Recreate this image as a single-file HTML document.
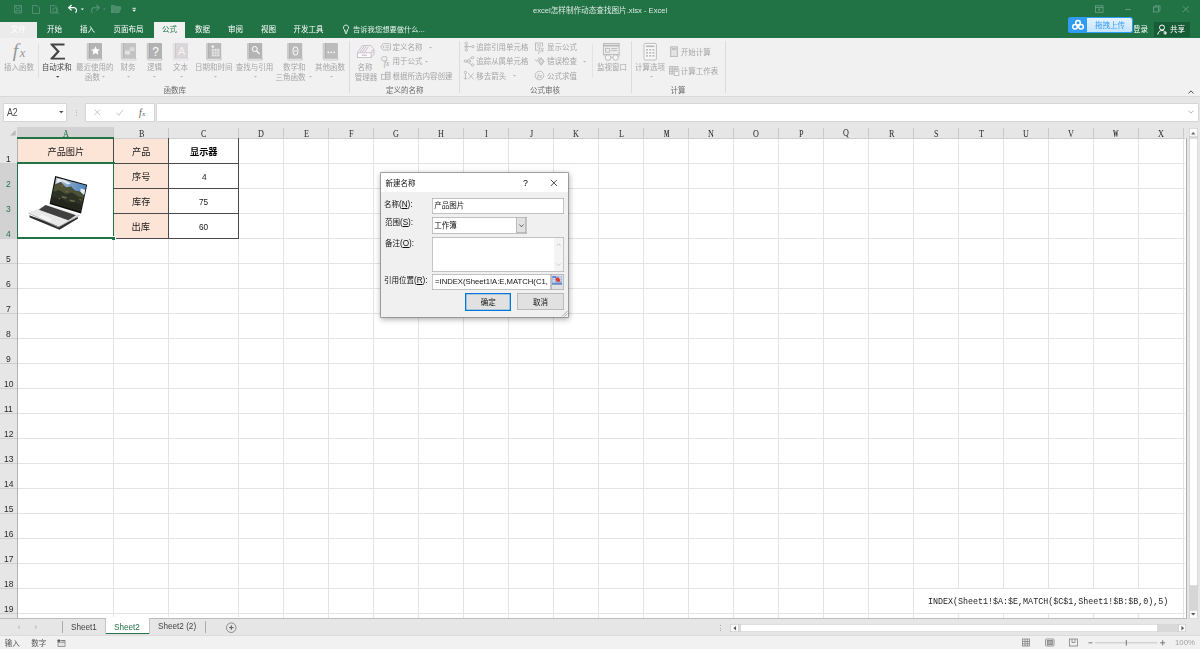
<!DOCTYPE html>
<html lang="zh-CN"><head><meta charset="utf-8"><title>excel怎样制作动态查找图片.xlsx - Excel</title>
<style>
html,body{margin:0;padding:0}
body{width:1200px;height:649px;overflow:hidden;position:relative;background:#fff;font-family:"Liberation Sans","Noto Sans CJK SC",sans-serif;}
.t{position:absolute;white-space:nowrap;line-height:1;opacity:.999}
.r{position:absolute}
.s{font-family:"Liberation Sans","Noto Sans CJK SC",sans-serif}
.m{font-family:"Liberation Mono","Noto Sans CJK SC",monospace}
.n{font-family:"Liberation Serif","Noto Serif CJK SC",serif}
svg{position:absolute;overflow:visible}
</style></head><body>

<div class="r" style="left:0px;top:0px;width:1200px;height:38px;background:#217346;"></div>
<div class="t" style="left:533px;top:5px;color:#dfeae3;font-size:7.6px;line-height:12px;">excel怎样制作动态查找图片.xlsx - Excel</div>
<div class="r" style="left:0px;top:22px;width:36.8px;height:16px;background:#ebebeb;"></div>
<div class="t" style="left:11px;top:24px;color:#ffffff;font-size:7.5px;line-height:12px;">文件</div>
<div class="r" style="left:154px;top:22px;width:31px;height:16px;background:#f1f1f1;"></div>
<div class="t" style="left:47px;top:24px;color:#fff;font-size:7.5px;line-height:12px;">开始</div>
<div class="t" style="left:80px;top:24px;color:#fff;font-size:7.5px;line-height:12px;">插入</div>
<div class="t" style="left:113.5px;top:24px;color:#fff;font-size:7.5px;line-height:12px;">页面布局</div>
<div class="t" style="left:162px;top:24px;color:#217346;font-size:7.5px;line-height:12px;">公式</div>
<div class="t" style="left:195px;top:24px;color:#fff;font-size:7.5px;line-height:12px;">数据</div>
<div class="t" style="left:228px;top:24px;color:#fff;font-size:7.5px;line-height:12px;">审阅</div>
<div class="t" style="left:261px;top:24px;color:#fff;font-size:7.5px;line-height:12px;">视图</div>
<div class="t" style="left:293.5px;top:24px;color:#fff;font-size:7.5px;line-height:12px;">开发工具</div>
<div class="t" style="left:353px;top:24px;color:#e8f1ec;font-size:7.3px;line-height:11px;">告诉我您想要做什么...</div>
<svg style="left:342px;top:24px" width="8" height="11" viewBox="0 0 8 11"><path d="M4 1a2.6 2.6 0 0 0-1.5 4.7v1.5h3V5.7A2.6 2.6 0 0 0 4 1z" fill="none" stroke="#fff" stroke-width=".8"/><path d="M2.8 8.4h2.4M3.1 9.5h1.8" stroke="#fff" stroke-width=".7"/></svg>
<svg style="left:0;top:0" width="150" height="20" viewBox="0 0 150 20">
<g fill="none" stroke="#56957a" stroke-width="0.85">
<path d="M14.5 5.5h7v7.5h-7z M16 5.5v2.8h4V5.5 M16 13v-2.6h4V13"/>
<path d="M32.5 5.5h4.5l2.5 2.5v5.5h-7z"/>
<path d="M50.5 5.5h4.5l2 2v5.5h-6.5z"/><circle cx="55" cy="10" r="2.2"/><path d="M56.7 11.7l2.3 2.3"/>
</g>
<path d="M75.5 12.8a2.9 2.9 0 0 0-2.4-5.1h-3.6" fill="none" stroke="#fff" stroke-width="1.25"/><path d="M71.6 5l-2.9 2.7 2.9 2.7" fill="none" stroke="#fff" stroke-width="1.25"/>
<path d="M80.8 8.5h3l-1.5 1.7z" fill="#fff"/>
<path d="M92.5 12.8a2.9 2.9 0 0 1 2.4-5.1h3.6" fill="none" stroke="#56957a" stroke-width="1.1"/><path d="M96.4 5l2.9 2.7-2.9 2.7" fill="none" stroke="#56957a" stroke-width="1.1"/>
<path d="M103 8.5h2.6l-1.3 1.5z" fill="#56957a"/>
<path d="M111.5 12.5v-7h3.5l1 1.2h4.5v1.3 M111.5 12.5l2-4.5h7.5l-2 4.5z" fill="#4a8a67" stroke="#56957a" stroke-width=".8"/>
<path d="M132.6 8.3h3.2" stroke="#fff" stroke-width=".9"/><path d="M132.4 9.8h3.6l-1.8 2z" fill="#fff"/>
</g></svg>
<svg style="left:1090px;top:0" width="110" height="20" viewBox="0 0 110 20"><g fill="none" stroke="#72a78c" stroke-width=".75">
<rect x="5.5" y="5.8" width="7.5" height="6.5"/><path d="M5.5 7.5h7.5M9.2 11.2V8.8M8 9.8l1.2-1.2 1.2 1.2"/>
<path d="M35 9.5h6"/>
<rect x="63.5" y="7" width="5" height="5"/><path d="M65 7V5.8h5v5h-1.5"/>
<path d="M92.8 6.2l6 6M98.8 6.2l-6 6"/></g></svg>
<div class="r" style="left:1068px;top:17px;width:65px;height:16px;border-radius:2.5px;background:#2f9bf3;overflow:hidden"><div class="r" style="left:19px;top:1px;width:45px;height:14px;border-radius:0 2px 2px 0;background:linear-gradient(#e3f3ff,#c4e4fd)"></div></div>
<svg style="left:1071px;top:19px" width="14" height="12" viewBox="0 0 14 12"><g fill="none" stroke="#fff" stroke-width="1.5"><circle cx="7" cy="3.8" r="2.3"/><circle cx="4" cy="7.8" r="2.3"/><circle cx="10" cy="7.8" r="2.3"/></g></svg>
<div class="t" style="left:1095px;top:20px;color:#3c9df5;font-size:7.5px;line-height:12px;">拖拽上传</div>
<div class="t" style="left:1133px;top:24px;color:#fff;font-size:7.5px;line-height:12px;clip-path:inset(0 0 0 1px)">登录</div>
<div class="r" style="left:1154px;top:22px;width:36px;height:15px;background:#185c37;"></div>
<svg style="left:1157px;top:24px" width="11" height="11" viewBox="0 0 11 11"><g fill="none" stroke="#fff" stroke-width="1"><circle cx="5" cy="3.5" r="2.5"/><path d="M.8 10.5c.3-2.6 2-4 4.2-4 1 0 1.8.3 2.5.8"/><path d="M8.2 7.2v3.6M6.4 9h3.6"/></g></svg>
<div class="t" style="left:1170px;top:24px;color:#fff;font-size:7.5px;line-height:12px;">共享</div>
<div class="r" style="left:0px;top:38px;width:1200px;height:58px;background:#f1f1f1;"></div>
<div class="r" style="left:0px;top:96px;width:1200px;height:1px;background:#dadada;"></div>
<div class="r" style="left:0px;top:97px;width:1200px;height:552px;background:#e6e6e6;"></div>
<div class="r" style="left:38px;top:44px;width:1px;height:34px;background:#e0e0e0;"></div>
<div class="r" style="left:349px;top:41px;width:1px;height:52px;background:#dcdcdc;"></div>
<div class="r" style="left:459px;top:41px;width:1px;height:52px;background:#dcdcdc;"></div>
<div class="r" style="left:592px;top:44px;width:1px;height:34px;background:#e3e3e3;"></div>
<div class="r" style="left:631px;top:41px;width:1px;height:52px;background:#dcdcdc;"></div>
<div class="r" style="left:725px;top:41px;width:1px;height:52px;background:#dcdcdc;"></div>
<div class="t" style="left:4px;top:62px;color:#a6a6a6;font-size:7.5px;line-height:12px;">插入函数</div>
<div class="t" style="left:41.8px;top:62px;color:#4a4a4a;font-size:7.5px;line-height:12px;">自动求和</div>
<div class="t" style="left:76px;top:62px;color:#a6a6a6;font-size:7.5px;line-height:12px;">最近使用的</div>
<div class="t" style="left:85px;top:72px;color:#a6a6a6;font-size:7.5px;line-height:12px;">函数</div>
<div class="t" style="left:120.5px;top:62px;color:#a6a6a6;font-size:7.5px;line-height:12px;">财务</div>
<div class="t" style="left:147px;top:62px;color:#a6a6a6;font-size:7.5px;line-height:12px;">逻辑</div>
<div class="t" style="left:173px;top:62px;color:#a6a6a6;font-size:7.5px;line-height:12px;">文本</div>
<div class="t" style="left:195px;top:62px;color:#a6a6a6;font-size:7.5px;line-height:12px;">日期和时间</div>
<div class="t" style="left:235.8px;top:62px;color:#a6a6a6;font-size:7.5px;line-height:12px;">查找与引用</div>
<div class="t" style="left:283px;top:62px;color:#a6a6a6;font-size:7.5px;line-height:12px;">数学和</div>
<div class="t" style="left:275.5px;top:72px;color:#a6a6a6;font-size:7.5px;line-height:12px;">三角函数</div>
<div class="t" style="left:315px;top:62px;color:#a6a6a6;font-size:7.5px;line-height:12px;">其他函数</div>
<div class="t" style="left:357.5px;top:62px;color:#a6a6a6;font-size:7.5px;line-height:12px;">名称</div>
<div class="t" style="left:354.7px;top:72px;color:#a6a6a6;font-size:7.5px;line-height:12px;">管理器</div>
<div class="t" style="left:163.5px;top:85px;color:#6a6a6a;font-size:7.5px;line-height:12px;">函数库</div>
<div class="t" style="left:386px;top:85px;color:#6a6a6a;font-size:7.5px;line-height:12px;">定义的名称</div>
<div class="t" style="left:530px;top:85px;color:#6a6a6a;font-size:7.5px;line-height:12px;">公式审核</div>
<div class="t" style="left:670.5px;top:85px;color:#6a6a6a;font-size:7.5px;line-height:12px;">计算</div>
<div class="t" style="left:392.5px;top:42px;color:#a6a6a6;font-size:7.5px;line-height:12px;">定义名称</div>
<div class="t" style="left:392.5px;top:56px;color:#a6a6a6;font-size:7.5px;line-height:12px;">用于公式</div>
<div class="t" style="left:392.5px;top:71px;color:#a6a6a6;font-size:7.5px;line-height:12px;">根据所选内容创建</div>
<div class="t" style="left:476.3px;top:42px;color:#a6a6a6;font-size:7.45px;line-height:12px;">追踪引用单元格</div>
<div class="t" style="left:476.3px;top:56px;color:#a6a6a6;font-size:7.45px;line-height:12px;">追踪从属单元格</div>
<div class="t" style="left:476.3px;top:71px;color:#a6a6a6;font-size:7.5px;line-height:12px;">移去箭头</div>
<div class="t" style="left:547px;top:42px;color:#a6a6a6;font-size:7.5px;line-height:12px;">显示公式</div>
<div class="t" style="left:547px;top:56px;color:#a6a6a6;font-size:7.5px;line-height:12px;">错误检查</div>
<div class="t" style="left:547px;top:71px;color:#a6a6a6;font-size:7.5px;line-height:12px;">公式求值</div>
<div class="t" style="left:597px;top:62px;color:#a6a6a6;font-size:7.5px;line-height:12px;">监视窗口</div>
<div class="t" style="left:635px;top:62px;color:#a6a6a6;font-size:7.5px;line-height:12px;">计算选项</div>
<div class="t" style="left:680.8px;top:47px;color:#a6a6a6;font-size:7.5px;line-height:12px;">开始计算</div>
<div class="t" style="left:680.8px;top:66px;color:#a6a6a6;font-size:7.5px;line-height:12px;">计算工作表</div>
<svg style="left:56.3px;top:75.65px" width="3.4" height="1.7" viewBox="0 0 4 2"><path d="M0 0h4L2 2z" fill="#444"/></svg>
<svg style="left:102px;top:75.75px" width="3" height="1.5" viewBox="0 0 4 2"><path d="M0 0h4L2 2z" fill="#b5b5b5"/></svg>
<svg style="left:127px;top:75.75px" width="3" height="1.5" viewBox="0 0 4 2"><path d="M0 0h4L2 2z" fill="#b5b5b5"/></svg>
<svg style="left:153px;top:75.75px" width="3" height="1.5" viewBox="0 0 4 2"><path d="M0 0h4L2 2z" fill="#b5b5b5"/></svg>
<svg style="left:179.5px;top:75.75px" width="3" height="1.5" viewBox="0 0 4 2"><path d="M0 0h4L2 2z" fill="#b5b5b5"/></svg>
<svg style="left:213.5px;top:75.75px" width="3" height="1.5" viewBox="0 0 4 2"><path d="M0 0h4L2 2z" fill="#b5b5b5"/></svg>
<svg style="left:254px;top:75.75px" width="3" height="1.5" viewBox="0 0 4 2"><path d="M0 0h4L2 2z" fill="#b5b5b5"/></svg>
<svg style="left:308.5px;top:75.75px" width="3" height="1.5" viewBox="0 0 4 2"><path d="M0 0h4L2 2z" fill="#b5b5b5"/></svg>
<svg style="left:329.5px;top:75.75px" width="3" height="1.5" viewBox="0 0 4 2"><path d="M0 0h4L2 2z" fill="#b5b5b5"/></svg>
<svg style="left:428.5px;top:46.75px" width="3" height="1.5" viewBox="0 0 4 2"><path d="M0 0h4L2 2z" fill="#b5b5b5"/></svg>
<svg style="left:425.2px;top:60.75px" width="3" height="1.5" viewBox="0 0 4 2"><path d="M0 0h4L2 2z" fill="#b5b5b5"/></svg>
<svg style="left:512.5px;top:75.05px" width="3" height="1.5" viewBox="0 0 4 2"><path d="M0 0h4L2 2z" fill="#b5b5b5"/></svg>
<svg style="left:583px;top:60.75px" width="3" height="1.5" viewBox="0 0 4 2"><path d="M0 0h4L2 2z" fill="#b5b5b5"/></svg>
<svg style="left:650px;top:75.95px" width="3" height="1.5" viewBox="0 0 4 2"><path d="M0 0h4L2 2z" fill="#b5b5b5"/></svg>
<svg style="left:0;top:38px" width="730" height="58" viewBox="0 38 730 58"><text x="12.8" y="57" font-family="Liberation Serif,serif" font-style="italic" font-size="19.5" fill="#969696">f</text><text x="19.8" y="57.3" font-family="Liberation Serif,serif" font-style="italic" font-size="12.5" fill="#969696">x</text><path d="M50.5 43.5h14v1.9h-10.3l5.6 6.1-5.6 6.2h10.8v1.8h-14.5v-1.3l6.3-6.7-6.3-6.7z" fill="#444"/><g><rect x="86.8" y="43" width="15.2" height="16" rx=".8" fill="#b4b4b4"/><rect x="86.8" y="43" width="2.3" height="16" fill="#fff" opacity=".28"/><rect x="89.1" y="43" width=".6" height="15.5" fill="#000" opacity=".12"/><path d="M88.39999999999999 58.4H102V60H88.39999999999999a.8 .8 0 0 1 0-1.6z" fill="#f7f7f7" stroke="#b4b4b4" stroke-width=".7"/><path d="M95.5 46.3l1.3 2.9 3.1.3-2.3 2.1.7 3.1-2.8-1.7-2.8 1.7.7-3.1-2.3-2.1 3.1-.3z" fill="#fff"/></g><g><rect x="120.8" y="43" width="15.2" height="16" rx=".8" fill="#c3c3c3"/><rect x="120.8" y="43" width="2.3" height="16" fill="#fff" opacity=".28"/><rect x="123.1" y="43" width=".6" height="15.5" fill="#000" opacity=".12"/><path d="M122.39999999999999 58.4H136V60H122.39999999999999a.8 .8 0 0 1 0-1.6z" fill="#f7f7f7" stroke="#c3c3c3" stroke-width=".7"/><rect x="129.8" y="47.2" width="4.8" height="3.8" rx=".8" fill="#dedede"/><rect x="125" y="50.6" width="5" height="3.8" rx=".8" fill="#e6e6e6"/><path d="M125 52h5M129.8 48.6h4.8" stroke="#cfcfcf" stroke-width=".5"/></g><g><rect x="146.8" y="43" width="15.2" height="16" rx=".8" fill="#b2b2b2"/><rect x="146.8" y="43" width="2.3" height="16" fill="#fff" opacity=".28"/><rect x="149.10000000000002" y="43" width=".6" height="15.5" fill="#000" opacity=".12"/><path d="M148.4 58.4H162V60H148.4a.8 .8 0 0 1 0-1.6z" fill="#f7f7f7" stroke="#b2b2b2" stroke-width=".7"/><text x="155.7" y="55.8" text-anchor="middle" font-family="Liberation Sans,sans-serif" font-size="12" fill="#fff">?</text></g><g><rect x="172.8" y="43" width="15.2" height="16" rx=".8" fill="#dad6da"/><rect x="172.8" y="43" width="2.3" height="16" fill="#fff" opacity=".28"/><rect x="175.10000000000002" y="43" width=".6" height="15.5" fill="#000" opacity=".12"/><path d="M174.4 58.4H188V60H174.4a.8 .8 0 0 1 0-1.6z" fill="#f7f7f7" stroke="#dad6da" stroke-width=".7"/><text x="181.7" y="55.3" text-anchor="middle" font-family="Liberation Sans,sans-serif" font-size="11" fill="#f6f4f6">A</text></g><g><rect x="206" y="43" width="15.2" height="16" rx=".8" fill="#b9b9b9"/><rect x="206" y="43" width="2.3" height="16" fill="#fff" opacity=".28"/><rect x="208.3" y="43" width=".6" height="15.5" fill="#000" opacity=".12"/><path d="M207.6 58.4H221.2V60H207.6a.8 .8 0 0 1 0-1.6z" fill="#f7f7f7" stroke="#b9b9b9" stroke-width=".7"/><rect x="211.8" y="48.8" width="7.6" height="7.6" fill="#e6e6e6"/><path d="M211.8 51.3h7.6M211.8 53.9h7.6M214.3 48.8v7.6M216.9 48.8v7.6" stroke="#b9b9b9" stroke-width=".6"/><circle cx="212.8" cy="46.6" r="1.8" fill="#eee" stroke="#a4a4a4" stroke-width=".5"/></g><g><rect x="247" y="43" width="15.2" height="16" rx=".8" fill="#b4b4b4"/><rect x="247" y="43" width="2.3" height="16" fill="#fff" opacity=".28"/><rect x="249.3" y="43" width=".6" height="15.5" fill="#000" opacity=".12"/><path d="M248.6 58.4H262.2V60H248.6a.8 .8 0 0 1 0-1.6z" fill="#f7f7f7" stroke="#b4b4b4" stroke-width=".7"/><circle cx="254.7" cy="49" r="2.5" fill="none" stroke="#fff" stroke-width="1"/><path d="M256.6 51l3 3.2" stroke="#fff" stroke-width="1.2"/></g><g><rect x="287" y="43" width="15.2" height="16" rx=".8" fill="#b9b9b9"/><rect x="287" y="43" width="2.3" height="16" fill="#fff" opacity=".28"/><rect x="289.3" y="43" width=".6" height="15.5" fill="#000" opacity=".12"/><path d="M288.6 58.4H302.2V60H288.6a.8 .8 0 0 1 0-1.6z" fill="#f7f7f7" stroke="#b9b9b9" stroke-width=".7"/><ellipse cx="295.5" cy="51" rx="2.4" ry="4" fill="none" stroke="#f4f4f4" stroke-width="1.1"/><path d="M293.5 51h4" stroke="#f4f4f4" stroke-width=".9"/></g><g><rect x="322.7" y="43" width="15.2" height="16" rx=".8" fill="#bcbcbc"/><rect x="322.7" y="43" width="2.3" height="16" fill="#fff" opacity=".28"/><rect x="325" y="43" width=".6" height="15.5" fill="#000" opacity=".12"/><path d="M324.3 58.4H337.9V60H324.3a.8 .8 0 0 1 0-1.6z" fill="#f7f7f7" stroke="#bcbcbc" stroke-width=".7"/><circle cx="328.3" cy="52.3" r=".85" fill="#fff"/><circle cx="331.2" cy="52.3" r=".85" fill="#fff"/><circle cx="334.1" cy="52.3" r=".85" fill="#fff"/></g><g fill="#f5f2f5" stroke="#c0b6c0" stroke-width=".8"><path d="M357.4 52.8l5-7.3h8.2l3.4 4v4.6l-3 3.4"/><path d="M364.3 46l-4.3 6.3M366.3 46.3l-4.2 6M368.3 46.8l-3.8 5.6M371.3 51.3l2.5-1.8M371.3 53l2.5-1.8"/><rect x="357.4" y="52.8" width="13.7" height="4.8" fill="#fcfcfc"/><path d="M361.5 55.2h5.5" stroke-width="1"/></g><g fill="none" stroke="#b2b2b2" stroke-width=".8"><path d="M383.3 43.6h6.2a1 1 0 0 1 1 1v4.4a1 1 0 0 1-1 1h-6.2l-2.6-3.2z"/><path d="M385.4 45.8h3.6M385.4 47.8h3.6"/><circle cx="383.5" cy="46.8" r=".5" fill="#b2b2b2"/></g><g fill="none" stroke="#b2b2b2" stroke-width=".8"><path d="M382.8 56.7h3.2a.8 .8 0 0 1 .8 .8v2.6a.8 .8 0 0 1-.8 .8h-3.2l-1.7-2.1z"/><text x="383.8" y="66" font-family="Liberation Serif,serif" font-style="italic" font-size="7.5" fill="#a2a2a2" stroke="none">fx</text></g><g fill="none" stroke="#b2b2b2" stroke-width=".8"><rect x="381.4" y="74.5" width="4" height="4.8"/><rect x="385.4" y="72.2" width="4.6" height="7.1" fill="#e4e4e4"/><path d="M385.4 74.6h4.6M385.4 77h4.6"/></g><g fill="none" stroke="#b2b2b2" stroke-width=".8"><circle cx="466.3" cy="43.3" r="1.2"/><circle cx="466.3" cy="50" r="1.2"/><circle cx="473" cy="46.6" r="1.2"/><path d="M466.3 44.5v4.3M464.2 46.6h7.6M465.3 45.6l2 2M467.3 45.6l-2 2"/></g><g fill="none" stroke="#b2b2b2" stroke-width=".8"><circle cx="465.3" cy="61.2" r="1.2"/><circle cx="472.6" cy="57.6" r="1.2"/><circle cx="472.6" cy="64.9" r="1.2"/><path d="M466.5 60.8l5-2.8M466.5 61.7l5 2.8M466.5 61.2h4.3M469.8 60l1.3 1.2-1.3 1.2"/></g><g fill="none" stroke="#b2b2b2" stroke-width=".8"><circle cx="465.5" cy="72.4" r="1.2"/><path d="M465.5 73.6v5.6M464 77.7l1.5 1.6 1.5-1.6M468.2 73.2l5.6 6.2M473.8 73.2l-5.6 6.2"/></g><g fill="none" stroke="#b2b2b2" stroke-width=".8"><rect x="535.4" y="43" width="7.2" height="7.2"/><path d="M537 45h4M537 47h2"/><rect x="538.3" y="46.5" width="5.5" height="6" fill="#f1f1f1" stroke="none"/><text x="538.3" y="52.3" font-family="Liberation Serif,serif" font-style="italic" font-size="7.5" fill="#a4a4a4" stroke="none">fx</text></g><g fill="none" stroke="#b2b2b2" stroke-width=".8"><path d="M534.8 59.3l1.9 2.1 2.8-4.3"/><path d="M541.2 57.8l3 3.4-3 4-3-4z" fill="#cfcfcf"/><path d="M541.2 60v2.4" stroke="#fff" stroke-width=".7"/></g><g fill="none" stroke="#b2b2b2" stroke-width=".8"><circle cx="539.5" cy="75.5" r="4.3"/><text x="537" y="78" font-family="Liberation Serif,serif" font-style="italic" font-size="7" fill="#a4a4a4" stroke="none">fx</text></g><g fill="none" stroke="#b7b7b7" stroke-width=".9"><rect x="603.4" y="43.4" width="15.7" height="11.2" fill="#ececec"/><path d="M603.4 45.6h15.7" stroke-width="1.7"/><path d="M605.5 48.4h4.2v3.8h-4.2zM611.2 48.6h6M611.2 50.6h6"/><circle cx="608" cy="57.6" r="2.8" fill="#f3f3f3"/><circle cx="615.6" cy="57.6" r="2.8" fill="#f3f3f3"/><path d="M610.8 57.2h2M605.3 56.6l-1.4-1.4M618.3 56.6l1.4-1.4"/></g><g fill="none" stroke="#b7b7b7" stroke-width=".9"><rect x="644" y="43.4" width="12.4" height="16.6" rx="1.3" fill="#f7f7f7"/><path d="M646 46.3h8.4" stroke-width="1.6"/></g><g fill="#bdbdbd"><rect x="646" y="49" width="2" height="1.7"/><rect x="646" y="52" width="2" height="1.7"/><rect x="646" y="55" width="2" height="1.7"/><rect x="649.2" y="49" width="2" height="1.7"/><rect x="649.2" y="52" width="2" height="1.7"/><rect x="649.2" y="55" width="2" height="1.7"/><rect x="652.4" y="49" width="2" height="1.7"/><rect x="652.4" y="52" width="2" height="1.7"/><rect x="652.4" y="55" width="2" height="1.7"/></g><g fill="none" stroke="#b7b7b7" stroke-width=".8"><rect x="670.4" y="46.8" width="7.2" height="9.8" fill="#dcdcdc"/><path d="M671.8 48.9h4.4" stroke-width="1.3"/><path d="M672 51.3h4M672 53h4M672 54.7h4" stroke="#f4f4f4" stroke-dasharray="1 .5"/></g><g fill="none" stroke="#b7b7b7" stroke-width=".8"><rect x="669.4" y="66.4" width="8.6" height="7.6" fill="#e2e2e2"/><path d="M669.4 68.9h8.6M669.4 71.4h8.6M672.3 66.4v7.6M675.1 66.4v7.6"/><rect x="674.3" y="69.8" width="4.6" height="5.8" fill="#f4f4f4"/><path d="M675.3 71.3h2.6" stroke-width="1"/></g></svg>
<svg style="left:1188px;top:89.5px" width="6" height="4" viewBox="0 0 6 4"><path d="M.5 3.5L3 .8l2.5 2.7" fill="none" stroke="#555" stroke-width="1"/></svg>
<div class="r" style="left:3.5px;top:103.5px;width:62.8px;height:17px;background:#fff;box-shadow:0 0 0 .7px #cfcfcf"></div>
<div class="t" style="left:7.3px;top:105px;color:#4a4a4a;font-size:10.2px;line-height:16px;transform-origin:0 50%;transform:scaleX(0.86);">A2</div>
<svg style="left:58.7px;top:110.64999999999999px" width="4.6" height="2.3" viewBox="0 0 4 2"><path d="M0 0h4L2 2z" fill="#505050"/></svg>
<div class="r" style="left:75.6px;top:109.5px;width:1px;height:1px;background:#b8b8b8;"></div>
<div class="r" style="left:75.6px;top:112px;width:1px;height:1px;background:#b8b8b8;"></div>
<div class="r" style="left:75.6px;top:114.5px;width:1px;height:1px;background:#b8b8b8;"></div>
<div class="r" style="left:85.5px;top:103.5px;width:68.5px;height:17px;background:#fff;box-shadow:0 0 0 .7px #cfcfcf"></div>
<svg style="left:93px;top:108px" width="60" height="9" viewBox="0 0 60 9"><path d="M1.5 1.5l5.5 5.5M7 1.5L1.5 7" stroke="#c0c0c0" stroke-width=".9" fill="none"/><path d="M23.5 4.8l2.3 2.5 4.2-5.5" stroke="#c0c0c0" stroke-width=".9" fill="none"/><text x="46" y="7.5" font-family="Liberation Serif,serif" font-style="italic" font-size="9.5" fill="#555">f</text><text x="49.3" y="7.5" font-family="Liberation Serif,serif" font-style="italic" font-size="6.5" fill="#555">x</text></svg>
<div class="r" style="left:156.5px;top:103.5px;width:1041px;height:17px;background:#fff;box-shadow:0 0 0 .7px #cfcfcf"></div>
<svg style="left:1188px;top:110px" width="6" height="4" viewBox="0 0 6 4"><path d="M.5 .6L3 3.2 5.5 .6" fill="none" stroke="#b0b0b0" stroke-width=".9"/></svg>
<div class="r" style="left:17px;top:138px;width:1169.5px;height:480px;background:#fff;"></div>
<div class="r" style="left:17px;top:127px;width:96.5px;height:10.5px;background:#d2d2d2;"></div>
<div class="r" style="left:17px;top:138px;width:97px;height:25px;background:#fce4d6;"></div>
<div class="r" style="left:113.5px;top:138px;width:55px;height:100px;background:#fce4d6;"></div>
<div class="r" style="left:0px;top:163px;width:16.5px;height:75px;background:#d2d2d2;"></div>
<svg style="left:0;top:0" width="1200" height="649" viewBox="0 0 1200 649" shape-rendering="crispEdges"><rect x="283" y="138" width="1" height="480" fill="#e3e3e3"/><rect x="328" y="138" width="1" height="480" fill="#e3e3e3"/><rect x="373" y="138" width="1" height="480" fill="#e3e3e3"/><rect x="418" y="138" width="1" height="480" fill="#e3e3e3"/><rect x="463" y="138" width="1" height="480" fill="#e3e3e3"/><rect x="508" y="138" width="1" height="480" fill="#e3e3e3"/><rect x="553" y="138" width="1" height="480" fill="#e3e3e3"/><rect x="598" y="138" width="1" height="480" fill="#e3e3e3"/><rect x="643" y="138" width="1" height="480" fill="#e3e3e3"/><rect x="688" y="138" width="1" height="480" fill="#e3e3e3"/><rect x="733" y="138" width="1" height="480" fill="#e3e3e3"/><rect x="778" y="138" width="1" height="480" fill="#e3e3e3"/><rect x="823" y="138" width="1" height="480" fill="#e3e3e3"/><rect x="868" y="138" width="1" height="480" fill="#e3e3e3"/><rect x="913" y="138" width="1" height="480" fill="#e3e3e3"/><rect x="958" y="138" width="1" height="480" fill="#e3e3e3"/><rect x="1003" y="138" width="1" height="480" fill="#e3e3e3"/><rect x="1048" y="138" width="1" height="480" fill="#e3e3e3"/><rect x="1093" y="138" width="1" height="480" fill="#e3e3e3"/><rect x="1138" y="138" width="1" height="480" fill="#e3e3e3"/><rect x="1183" y="138" width="1" height="480" fill="#e3e3e3"/><rect x="113" y="238" width="1" height="379" fill="#e3e3e3"/><rect x="168" y="238" width="1" height="379" fill="#e3e3e3"/><rect x="238" y="238" width="1" height="379" fill="#e3e3e3"/><rect x="239" y="163" width="946" height="1" fill="#e3e3e3"/><rect x="239" y="188" width="946" height="1" fill="#e3e3e3"/><rect x="239" y="213" width="946" height="1" fill="#e3e3e3"/><rect x="239" y="238" width="946" height="1" fill="#e3e3e3"/><rect x="17" y="263" width="1168" height="1" fill="#e3e3e3"/><rect x="17" y="288" width="1168" height="1" fill="#e3e3e3"/><rect x="17" y="313" width="1168" height="1" fill="#e3e3e3"/><rect x="17" y="338" width="1168" height="1" fill="#e3e3e3"/><rect x="17" y="363" width="1168" height="1" fill="#e3e3e3"/><rect x="17" y="388" width="1168" height="1" fill="#e3e3e3"/><rect x="17" y="413" width="1168" height="1" fill="#e3e3e3"/><rect x="17" y="438" width="1168" height="1" fill="#e3e3e3"/><rect x="17" y="463" width="1168" height="1" fill="#e3e3e3"/><rect x="17" y="488" width="1168" height="1" fill="#e3e3e3"/><rect x="17" y="513" width="1168" height="1" fill="#e3e3e3"/><rect x="17" y="538" width="1168" height="1" fill="#e3e3e3"/><rect x="17" y="563" width="1168" height="1" fill="#e3e3e3"/><rect x="17" y="588" width="1168" height="1" fill="#e3e3e3"/><rect x="17" y="613" width="1168" height="1" fill="#e3e3e3"/><rect x="113" y="128" width="1" height="10" fill="#c9c9c9"/><rect x="168" y="128" width="1" height="10" fill="#c9c9c9"/><rect x="238" y="128" width="1" height="10" fill="#c9c9c9"/><rect x="283" y="128" width="1" height="10" fill="#c9c9c9"/><rect x="328" y="128" width="1" height="10" fill="#c9c9c9"/><rect x="373" y="128" width="1" height="10" fill="#c9c9c9"/><rect x="418" y="128" width="1" height="10" fill="#c9c9c9"/><rect x="463" y="128" width="1" height="10" fill="#c9c9c9"/><rect x="508" y="128" width="1" height="10" fill="#c9c9c9"/><rect x="553" y="128" width="1" height="10" fill="#c9c9c9"/><rect x="598" y="128" width="1" height="10" fill="#c9c9c9"/><rect x="643" y="128" width="1" height="10" fill="#c9c9c9"/><rect x="688" y="128" width="1" height="10" fill="#c9c9c9"/><rect x="733" y="128" width="1" height="10" fill="#c9c9c9"/><rect x="778" y="128" width="1" height="10" fill="#c9c9c9"/><rect x="823" y="128" width="1" height="10" fill="#c9c9c9"/><rect x="868" y="128" width="1" height="10" fill="#c9c9c9"/><rect x="913" y="128" width="1" height="10" fill="#c9c9c9"/><rect x="958" y="128" width="1" height="10" fill="#c9c9c9"/><rect x="1003" y="128" width="1" height="10" fill="#c9c9c9"/><rect x="1048" y="128" width="1" height="10" fill="#c9c9c9"/><rect x="1093" y="128" width="1" height="10" fill="#c9c9c9"/><rect x="1138" y="128" width="1" height="10" fill="#c9c9c9"/><rect x="1183" y="128" width="1" height="10" fill="#c9c9c9"/><rect x="17" y="137.5" width="1168" height="1" fill="#cfcfcf"/><rect x="0" y="163" width="17" height="1" fill="#cfcfcf"/><rect x="0" y="188" width="17" height="1" fill="#cfcfcf"/><rect x="0" y="213" width="17" height="1" fill="#cfcfcf"/><rect x="0" y="238" width="17" height="1" fill="#cfcfcf"/><rect x="0" y="263" width="17" height="1" fill="#cfcfcf"/><rect x="0" y="288" width="17" height="1" fill="#cfcfcf"/><rect x="0" y="313" width="17" height="1" fill="#cfcfcf"/><rect x="0" y="338" width="17" height="1" fill="#cfcfcf"/><rect x="0" y="363" width="17" height="1" fill="#cfcfcf"/><rect x="0" y="388" width="17" height="1" fill="#cfcfcf"/><rect x="0" y="413" width="17" height="1" fill="#cfcfcf"/><rect x="0" y="438" width="17" height="1" fill="#cfcfcf"/><rect x="0" y="463" width="17" height="1" fill="#cfcfcf"/><rect x="0" y="488" width="17" height="1" fill="#cfcfcf"/><rect x="0" y="513" width="17" height="1" fill="#cfcfcf"/><rect x="0" y="538" width="17" height="1" fill="#cfcfcf"/><rect x="0" y="563" width="17" height="1" fill="#cfcfcf"/><rect x="0" y="588" width="17" height="1" fill="#cfcfcf"/><rect x="0" y="613" width="17" height="1" fill="#cfcfcf"/><rect x="16.5" y="138" width="1" height="480" fill="#b2b2b2"/><rect x="1186" y="138" width="1" height="480" fill="#b0b0b0"/></svg>
<svg style="left:10px;top:130.3px" width="5.7" height="5.5" viewBox="0 0 7 7"><path d="M7 0v7H0z" fill="#b9b9b9"/></svg>
<div class="t n" style="left:62.5px;top:126px;color:#217346;font-size:9.6px;line-height:15px;transform-origin:0 50%;transform:scaleX(0.85);">A</div>
<div class="t n" style="left:138.5px;top:126px;color:#2a2a2a;font-size:9.6px;line-height:15px;transform-origin:0 50%;transform:scaleX(0.85);">B</div>
<div class="t n" style="left:201px;top:126px;color:#2a2a2a;font-size:9.6px;line-height:15px;transform-origin:0 50%;transform:scaleX(0.85);">C</div>
<div class="t n" style="left:258px;top:126px;color:#2a2a2a;font-size:9.6px;line-height:15px;transform-origin:0 50%;transform:scaleX(0.85);">D</div>
<div class="t n" style="left:303.5px;top:126px;color:#2a2a2a;font-size:9.6px;line-height:15px;transform-origin:0 50%;transform:scaleX(0.85);">E</div>
<div class="t n" style="left:348.5px;top:126px;color:#2a2a2a;font-size:9.6px;line-height:15px;transform-origin:0 50%;transform:scaleX(0.85);">F</div>
<div class="t n" style="left:393px;top:126px;color:#2a2a2a;font-size:9.6px;line-height:15px;transform-origin:0 50%;transform:scaleX(0.85);">G</div>
<div class="t n" style="left:438px;top:126px;color:#2a2a2a;font-size:9.6px;line-height:15px;transform-origin:0 50%;transform:scaleX(0.85);">H</div>
<div class="t n" style="left:485px;top:126px;color:#2a2a2a;font-size:9.6px;line-height:15px;transform-origin:0 50%;transform:scaleX(0.85);">I</div>
<div class="t n" style="left:529.5px;top:126px;color:#2a2a2a;font-size:9.6px;line-height:15px;transform-origin:0 50%;transform:scaleX(0.85);">J</div>
<div class="t n" style="left:573px;top:126px;color:#2a2a2a;font-size:9.6px;line-height:15px;transform-origin:0 50%;transform:scaleX(0.85);">K</div>
<div class="t n" style="left:618.5px;top:126px;color:#2a2a2a;font-size:9.6px;line-height:15px;transform-origin:0 50%;transform:scaleX(0.85);">L</div>
<div class="t n" style="left:663.5px;top:126px;color:#2a2a2a;font-size:9.6px;line-height:15px;transform-origin:0 50%;transform:scaleX(0.6);font-weight:bold;">M</div>
<div class="t n" style="left:708px;top:126px;color:#2a2a2a;font-size:9.6px;line-height:15px;transform-origin:0 50%;transform:scaleX(0.85);">N</div>
<div class="t n" style="left:753px;top:126px;color:#2a2a2a;font-size:9.6px;line-height:15px;transform-origin:0 50%;transform:scaleX(0.85);">O</div>
<div class="t n" style="left:798.5px;top:126px;color:#2a2a2a;font-size:9.6px;line-height:15px;transform-origin:0 50%;transform:scaleX(0.85);">P</div>
<div class="t n" style="left:843px;top:125px;color:#2a2a2a;font-size:9.6px;line-height:15px;transform-origin:0 50%;transform:scaleX(0.85);">Q</div>
<div class="t n" style="left:888.5px;top:126px;color:#2a2a2a;font-size:9.6px;line-height:15px;transform-origin:0 50%;transform:scaleX(0.85);">R</div>
<div class="t n" style="left:934px;top:126px;color:#2a2a2a;font-size:9.6px;line-height:15px;transform-origin:0 50%;transform:scaleX(0.85);">S</div>
<div class="t n" style="left:978.5px;top:126px;color:#2a2a2a;font-size:9.6px;line-height:15px;transform-origin:0 50%;transform:scaleX(0.85);">T</div>
<div class="t n" style="left:1023px;top:126px;color:#2a2a2a;font-size:9.6px;line-height:15px;transform-origin:0 50%;transform:scaleX(0.85);">U</div>
<div class="t n" style="left:1068px;top:126px;color:#2a2a2a;font-size:9.6px;line-height:15px;transform-origin:0 50%;transform:scaleX(0.85);">V</div>
<div class="t n" style="left:1113px;top:126px;color:#2a2a2a;font-size:9.6px;line-height:15px;transform-origin:0 50%;transform:scaleX(0.58);font-weight:bold;">W</div>
<div class="t n" style="left:1158px;top:126px;color:#2a2a2a;font-size:9.6px;line-height:15px;transform-origin:0 50%;transform:scaleX(0.85);">X</div>
<div class="t" style="left:6.3px;top:151px;color:#2a2a2a;font-size:9.5px;line-height:15px;transform-origin:0 50%;transform:scaleX(0.9);">1</div>
<div class="t" style="left:6.3px;top:176px;color:#217346;font-size:9.5px;line-height:15px;transform-origin:0 50%;transform:scaleX(0.9);">2</div>
<div class="t" style="left:6.3px;top:201px;color:#217346;font-size:9.5px;line-height:15px;transform-origin:0 50%;transform:scaleX(0.9);">3</div>
<div class="t" style="left:6.3px;top:226px;color:#217346;font-size:9.5px;line-height:15px;transform-origin:0 50%;transform:scaleX(0.9);">4</div>
<div class="t" style="left:6.3px;top:251px;color:#2a2a2a;font-size:9.5px;line-height:15px;transform-origin:0 50%;transform:scaleX(0.9);">5</div>
<div class="t" style="left:6.3px;top:276px;color:#2a2a2a;font-size:9.5px;line-height:15px;transform-origin:0 50%;transform:scaleX(0.9);">6</div>
<div class="t" style="left:6.3px;top:301px;color:#2a2a2a;font-size:9.5px;line-height:15px;transform-origin:0 50%;transform:scaleX(0.9);">7</div>
<div class="t" style="left:6.3px;top:326px;color:#2a2a2a;font-size:9.5px;line-height:15px;transform-origin:0 50%;transform:scaleX(0.9);">8</div>
<div class="t" style="left:6.3px;top:351px;color:#2a2a2a;font-size:9.5px;line-height:15px;transform-origin:0 50%;transform:scaleX(0.9);">9</div>
<div class="t" style="left:3.8px;top:376px;color:#2a2a2a;font-size:9.5px;line-height:15px;transform-origin:0 50%;transform:scaleX(0.9);">10</div>
<div class="t" style="left:4.3px;top:401px;color:#2a2a2a;font-size:9.5px;line-height:15px;transform-origin:0 50%;transform:scaleX(0.9);">11</div>
<div class="t" style="left:4.3px;top:426px;color:#2a2a2a;font-size:9.5px;line-height:15px;transform-origin:0 50%;transform:scaleX(0.9);">12</div>
<div class="t" style="left:4.3px;top:451px;color:#2a2a2a;font-size:9.5px;line-height:15px;transform-origin:0 50%;transform:scaleX(0.9);">13</div>
<div class="t" style="left:4.3px;top:476px;color:#2a2a2a;font-size:9.5px;line-height:15px;transform-origin:0 50%;transform:scaleX(0.9);">14</div>
<div class="t" style="left:4.3px;top:501px;color:#2a2a2a;font-size:9.5px;line-height:15px;transform-origin:0 50%;transform:scaleX(0.9);">15</div>
<div class="t" style="left:4.3px;top:526px;color:#2a2a2a;font-size:9.5px;line-height:15px;transform-origin:0 50%;transform:scaleX(0.9);">16</div>
<div class="t" style="left:4.3px;top:551px;color:#2a2a2a;font-size:9.5px;line-height:15px;transform-origin:0 50%;transform:scaleX(0.9);">17</div>
<div class="t" style="left:4.3px;top:576px;color:#2a2a2a;font-size:9.5px;line-height:15px;transform-origin:0 50%;transform:scaleX(0.9);">18</div>
<div class="t" style="left:4.3px;top:601px;color:#2a2a2a;font-size:9.5px;line-height:15px;transform-origin:0 50%;transform:scaleX(0.9);">19</div>
<div class="r" style="left:0px;top:613.5px;width:16.5px;height:4.5px;background:#e6e6e6;"></div>
<svg style="left:0;top:0" width="300" height="260" viewBox="0 0 300 260" shape-rendering="crispEdges"><rect x="113" y="138" width="1" height="101" fill="#4a4a4a"/><rect x="168" y="138" width="1" height="101" fill="#4a4a4a"/><rect x="238" y="138" width="1" height="101" fill="#4a4a4a"/><rect x="113" y="163" width="126" height="1" fill="#4a4a4a"/><rect x="113" y="188" width="126" height="1" fill="#4a4a4a"/><rect x="113" y="213" width="126" height="1" fill="#4a4a4a"/><rect x="113" y="238" width="126" height="1" fill="#4a4a4a"/><rect x="17" y="136.8" width="97" height="1.9" fill="#217346"/><rect x="16.5" y="162" width="98" height="1.8" fill="#217346"/><rect x="16.5" y="237" width="96" height="1.8" fill="#217346"/><rect x="16.5" y="162" width="1.5" height="76.5" fill="#217346"/><rect x="112.8" y="162" width="1.6" height="74" fill="#217346"/><rect x="111.5" y="236" width="4" height="4" fill="#fff"/><rect x="112.2" y="236.7" width="3" height="3" fill="#217346"/><rect x="16.5" y="163" width="1" height="75" fill="#217346"/></svg>
<div class="t s" style="left:47.5px;top:145px;color:#1a1a1a;font-size:9.2px;line-height:14px;">产品图片</div>
<div class="t s" style="left:132px;top:145px;color:#1a1a1a;font-size:9.2px;line-height:14px;">产品</div>
<div class="t s" style="left:190px;top:145px;color:#000;font-size:9.2px;line-height:14px;font-weight:bold;">显示器</div>
<div class="t s" style="left:132px;top:170px;color:#1a1a1a;font-size:9.2px;line-height:14px;">序号</div>
<div class="t s" style="left:132px;top:195px;color:#1a1a1a;font-size:9.2px;line-height:14px;">库存</div>
<div class="t s" style="left:131.5px;top:220px;color:#1a1a1a;font-size:9.2px;line-height:14px;">出库</div>
<div class="t" style="left:201.7px;top:170px;color:#1a1a1a;font-size:9.2px;line-height:14px;transform-origin:0 50%;transform:scaleX(0.9);">4</div>
<div class="t" style="left:199.2px;top:195px;color:#1a1a1a;font-size:9.2px;line-height:14px;transform-origin:0 50%;transform:scaleX(0.9);">75</div>
<div class="t" style="left:199.2px;top:220px;color:#1a1a1a;font-size:9.2px;line-height:14px;transform-origin:0 50%;transform:scaleX(0.9);">60</div>
<div class="r" style="left:914px;top:589px;width:269px;height:24px;background:#fff;"></div>
<div class="t m" style="left:928px;top:595px;color:#222;font-size:9.2px;line-height:14px;transform-origin:0 50%;transform:scaleX(0.908);">INDEX(Sheet1!$A:$E,MATCH($C$1,Sheet1!$B:$B,0),5)</div>
<svg style="left:17px;top:163px" width="97" height="75" viewBox="17 163 97 75">
<defs><linearGradient id="sky" x1="0" y1="0" x2="1" y2="0"><stop offset="0" stop-color="#b9c6d3"/><stop offset=".45" stop-color="#7fa3c6"/><stop offset="1" stop-color="#4f86c3"/></linearGradient>
<filter id="bl" x="-10%" y="-10%" width="120%" height="120%"><feGaussianBlur stdDeviation=".35"/></filter></defs>
<g filter="url(#bl)">
<path d="M29.3 215.2l30.2 11 18-9.2.6 1.5-18.6 11.2-29.8-12.3z" fill="#2f2f2f"/>
<path d="M28.5 212.8l19.6-8.1 31.5 10.1-21.1 11.8z" fill="#e8e8e8"/>
<path d="M28.5 212.8l30 13.8 21.1-11.8v.8l-21.1 11.9-30-13.9z" fill="#a8a8a8"/>
<path d="M45.5 205.1l30.4 10.1-7.7 5-29.3-10.4z" fill="#3c3c3c"/>
<path d="M44 206.8l29.5 10M42 208l29.5 10M40.3 209.3l29.3 10.1" stroke="#555" stroke-width=".35" fill="none"/>
<path d="M41.9 214.6l10.7 4.4-3.6 2.4-10.7-4.5z" fill="#f4f4f4"/>
<path d="M55.2 176l32 8.7-6.2 28.7-31.4-9.5z" fill="#0d0d0d"/>
<path d="M56.1 177.4l30 8.1-5.7 25.7-29.6-8.8z" fill="#3a4230"/>
<path d="M56.1 177.4l30 8.1-2.2 9.8-3.3-3.5-5.8-1.2-3.8-4.2-4.8 1-5.5-5.5-5.6 2.7z" fill="url(#sky)"/>
<path d="M57 178.6l7.5 1.4 6.5 3.6-3.3.9-5.2-3-5.8 1.3z" fill="#e6eaee"/>
<path d="M80.6 188.5l4.6 1.3-1.1 5.2-3.7-3z" fill="#e8ecef"/>
<path d="M54.3 186l6.3-3.8 5.5 5.5 4.8-1 3.8 4.2 5.8 1.2 3.4 3.2-1.3 5.5-29.3-8.5z" fill="#4d5136"/>
<path d="M53 192l6-2 7 4 6-1.5 6 4 4.5 1-2.1 13.7-29.6-8.8z" fill="#2d3325"/>
<path d="M52 197l9 1.5 7 4.5 7-1 6.5 3.5-1.1 5.7-29.6-8.8z" fill="#23281d"/>
<path d="M60.5 185l2.8.6-.8 1.8zM65 190.5l3 .5-1 1.6zM78.5 198.5l3 .5-.6 2zM58 198l2.5.3-.8 1.5z" fill="#9a6f42" opacity=".7"/>
<path d="M62 196l5 1-1 1.8-4.5-1.2zM70 199.5l5 1.2-.5 1.5-4.8-1.2z" fill="#6a6a4a"/>
</g></svg>
<div class="r" style="left:0px;top:618px;width:1187px;height:31px;background:#e6e6e6;"></div>
<div class="r" style="left:0px;top:618px;width:1187px;height:1px;background:#bcbcbc;"></div>
<div class="r" style="left:0px;top:636px;width:1200px;height:13px;background:#f1f1f1;"></div>
<div class="r" style="left:0px;top:635.3px;width:1200px;height:0.8px;background:#dcdcdc;"></div>
<div class="t" style="left:70.5px;top:620px;color:#444;font-size:8.7px;line-height:14px;transform-origin:0 50%;transform:scaleX(0.94);">Sheet1</div>
<div class="r" style="left:105.7px;top:618px;width:43.3px;height:16.3px;background:#fff;"></div>
<div class="r" style="left:105.7px;top:633.2px;width:43.3px;height:1.2px;background:#217346;"></div>
<div class="t" style="left:114px;top:620px;color:#217346;font-size:8.7px;line-height:14px;transform-origin:0 50%;transform:scaleX(0.94);">Sheet2</div>
<div class="t" style="left:158.3px;top:619px;color:#444;font-size:8.7px;line-height:14px;transform-origin:0 50%;transform:scaleX(0.94);">Sheet2 (2)</div>
<div class="r" style="left:62.2px;top:621.2px;width:1px;height:12px;background:#ababab;"></div>
<div class="r" style="left:205.4px;top:621.2px;width:1px;height:12px;background:#ababab;"></div>
<div class="r" style="left:105.2px;top:618.5px;width:0.8px;height:15px;background:#c6c6c6;"></div>
<div class="r" style="left:149px;top:618.5px;width:0.8px;height:15px;background:#c6c6c6;"></div>
<svg style="left:15px;top:623px" width="30" height="8" viewBox="0 0 30 8"><path d="M4.5 2.5L2.8 4.2l1.7 1.7zM20.3 2.5L22 4.2l-1.7 1.7z" fill="#c4c4c4" stroke="#c4c4c4" stroke-width=".5"/></svg>
<svg style="left:226px;top:621.5px" width="11" height="11" viewBox="0 0 11 11"><circle cx="5.2" cy="5.7" r="4.8" fill="none" stroke="#777" stroke-width=".8"/><path d="M5.3 3.4v4.4M3.1 5.6h4.4" stroke="#555" stroke-width="1"/></svg>
<div class="r" style="left:720.3px;top:625px;width:1px;height:1px;background:#a8a8a8;"></div>
<div class="r" style="left:720.3px;top:627.5px;width:1px;height:1px;background:#a8a8a8;"></div>
<div class="r" style="left:720.3px;top:630px;width:1px;height:1px;background:#a8a8a8;"></div>
<div class="r" style="left:730.4px;top:623.5px;width:455.8px;height:8.7px;background:#d9d9d9;"></div>
<div class="r" style="left:730.4px;top:623.5px;width:9px;height:8.7px;background:#fbfbfb;box-shadow:inset 0 0 0 .6px #bdbdbd"></div>
<div class="r" style="left:1177.5px;top:623.5px;width:8.7px;height:8.7px;background:#fbfbfb;box-shadow:inset 0 0 0 .6px #bdbdbd"></div>
<div class="r" style="left:739.6px;top:623.5px;width:418.9px;height:8.7px;background:#fff;box-shadow:inset 0 0 0 .6px #c2c2c2"></div>
<svg style="left:733.3px;top:625.6px" width="3.5" height="4.6" viewBox="0 0 4 5"><path d="M3.5 0v5L.5 2.5z" fill="#555"/></svg>
<svg style="left:1180.6px;top:625.6px" width="3.5" height="4.6" viewBox="0 0 4 5"><path d="M.5 0v5l3-2.5z" fill="#555"/></svg>
<div class="r" style="left:1189px;top:128.2px;width:8.7px;height:490.5px;background:#d6d6d6;"></div>
<div class="r" style="left:1189px;top:128.2px;width:8.7px;height:9.3px;background:#fbfbfb;box-shadow:inset 0 0 0 .6px #c2c2c2"></div>
<div class="r" style="left:1189px;top:137.5px;width:8.7px;height:448.2px;background:#fff;box-shadow:inset 0 0 0 .6px #c2c2c2"></div>
<div class="r" style="left:1189px;top:610px;width:8.7px;height:8.7px;background:#fbfbfb;box-shadow:inset 0 0 0 .6px #c2c2c2;border-radius:1px"></div>
<svg style="left:1191.2px;top:131.6px" width="4.4" height="2.6" viewBox="0 0 5 3"><path d="M0 3h5L2.5 0z" fill="#666"/></svg>
<svg style="left:1191.2px;top:613.3px" width="4.4" height="2.6" viewBox="0 0 5 3"><path d="M0 0h5L2.5 3z" fill="#555"/></svg>
<div class="t" style="left:4.8px;top:638px;color:#555;font-size:7.5px;line-height:12px;">输入</div>
<div class="t" style="left:31.3px;top:638px;color:#555;font-size:7.5px;line-height:12px;">数字</div>
<svg style="left:56.5px;top:638.5px" width="9" height="8" viewBox="0 0 9 8"><rect x="1" y="1.5" width="7" height="6" fill="#e4e4e4" stroke="#888" stroke-width=".8"/><path d="M1 3.3h7" stroke="#888" stroke-width=".8"/><rect x=".6" y=".6" width="2.4" height="2.2" fill="#555"/><rect x="5" y="1" width="2.6" height="1.2" fill="#777"/></svg>
<svg style="left:1015px;top:636px" width="185" height="13" viewBox="1015 636 185 13"><g fill="none" stroke="#808080" stroke-width=".8">
<rect x="1022.5" y="639" width="7" height="7"/><path d="M1022.5 641.5h7M1022.5 643.8h7M1025 639v7M1027.3 639v7"/>
<rect x="1045.5" y="639" width="8.5" height="7" rx="1"/><rect x="1047.3" y="640.5" width="5" height="4.2" fill="#aaa"/>
<rect x="1069.5" y="639" width="8" height="7"/><path d="M1072 639v3.5h3v-3.5"/></g>
<path d="M1088.5 642.8h4" stroke="#777" stroke-width="1"/><path d="M1095 642.8h62" stroke="#b9b9b9" stroke-width=".8"/><rect x="1125.8" y="640" width="1.1" height="5.6" fill="#808080"/>
<path d="M1160.2 642.8h5M1162.7 640.3v5" stroke="#777" stroke-width="1"/></svg>
<div class="t" style="left:1175px;top:637px;color:#a0a0a0;font-size:7.8px;line-height:12px;">100%</div>
<div class="r" style="left:380.5px;top:173px;width:187.5px;height:144px;background:#f0f0f0;box-shadow:0 0 0 .7px #858585,0 1px 6px .5px rgba(0,0,0,.36)"></div>
<div class="r" style="left:380.5px;top:173px;width:187.5px;height:19px;background:#fff;"></div>
<div class="t" style="left:385.5px;top:178px;color:#111;font-size:7.5px;line-height:12px;">新建名称</div>
<div class="t" style="left:523px;top:176px;color:#000;font-size:8.8px;line-height:14px;">?</div>
<svg style="left:550px;top:179px" width="8" height="8" viewBox="0 0 8 8"><path d="M.8 .8l6.2 6.2M7 .8L.8 7" stroke="#222" stroke-width=".8" fill="none"/></svg>
<div class="t" style="left:383.9px;top:199px;color:#111;font-size:7.5px;line-height:12px;">名称<span style="font-size:8.2px">(<u>N</u>):</span></div>
<div class="t" style="left:384.9px;top:217px;color:#111;font-size:7.5px;line-height:12px;">范围<span style="font-size:8.2px">(<u>S</u>):</span></div>
<div class="t" style="left:384.9px;top:238px;color:#111;font-size:7.5px;line-height:12px;">备注<span style="font-size:8.2px">(<u>O</u>):</span></div>
<div class="t" style="left:383.9px;top:275px;color:#111;font-size:7.5px;line-height:12px;">引用位置<span style="font-size:8.2px">(<u>R</u>):</span></div>
<div class="r" style="left:432px;top:198.3px;width:132.2px;height:15.3px;background:#fff;box-shadow:inset 0 0 0 .7px #adadad"></div>
<div class="t" style="left:434.3px;top:200px;color:#111;font-size:7.5px;line-height:12px;">产品图片</div>
<div class="r" style="left:432px;top:216.8px;width:94.5px;height:16.8px;background:#fff;box-shadow:inset 0 0 0 .7px #adadad"></div>
<div class="t" style="left:434.3px;top:220px;color:#111;font-size:7.5px;line-height:12px;">工作簿</div>
<div class="r" style="left:516px;top:217.3px;width:10.3px;height:15.8px;background:#e1e1e1;box-shadow:inset 0 0 0 .7px #adadad"></div>
<svg style="left:518.5px;top:223.5px" width="5" height="3.5" viewBox="0 0 5 3.5"><path d="M.4 .5l2.1 2.3L4.6 .5" fill="none" stroke="#444" stroke-width=".8"/></svg>
<div class="r" style="left:432px;top:236.5px;width:132.2px;height:35px;background:#fff;"></div>
<div class="r" style="left:554.3px;top:237.3px;width:9.2px;height:33.5px;background:#f4f4f4;"></div>
<div class="r" style="left:432px;top:236.5px;width:132.2px;height:35px;background:transparent;box-shadow:inset 0 0 0 .7px #adadad"></div>
<svg style="left:555.5px;top:243px" width="5" height="3.5" viewBox="0 0 5 3.5"><path d="M.4 3L2.5 .7 4.6 3" fill="none" stroke="#c2c2c2" stroke-width=".8"/></svg>
<svg style="left:555.5px;top:262.8px" width="5" height="3.5" viewBox="0 0 5 3.5"><path d="M.4 .5l2.1 2.3L4.6 .5" fill="none" stroke="#c2c2c2" stroke-width=".8"/></svg>
<div class="r" style="left:432px;top:274.3px;width:118.7px;height:15.8px;background:#fff;box-shadow:inset 0 0 0 .7px #adadad"></div>
<div class="t" style="left:435.3px;top:275px;color:#111;font-size:8.1px;line-height:13px;transform-origin:0 50%;transform:scaleX(0.95);">=INDEX(Sheet1!A:E,MATCH(C1,</div>
<div class="r" style="left:551.2px;top:274.3px;width:13px;height:15.8px;background:#e1e1e1;box-shadow:inset 0 0 0 .7px #adadad"></div>
<svg style="left:552px;top:276.2px" width="10" height="8.6" viewBox="0 0 10 8.6"><rect width="10" height="8.6" fill="#9db6e3"/><rect x=".4" y=".5" width="3.6" height="1.1" fill="#2f5fd0"/><path d="M.6 2.7h2.4M.6 4.4h2.4M.6 6.1h2.4M6.8 1h2.6M7.4 2.7h2M7.6 4.4h1.8" stroke="#eaf1fb" stroke-width=".9"/><rect y="6.9" width="10" height="1.7" fill="#6787c8"/><path d="M3.6 2.2l2.6-1 2.2 2.7-.9 1.9-1.5.2-2.1-1.6z" fill="#e23a2c"/></svg>
<div class="r" style="left:465.4px;top:293px;width:45.6px;height:17.5px;background:#e1e1e1;box-shadow:inset 0 0 0 1.3px #0078d7"></div>
<div class="t" style="left:480.7px;top:297px;color:#111;font-size:7.5px;line-height:12px;">确定</div>
<div class="r" style="left:517.3px;top:293.2px;width:46.5px;height:17.1px;background:#e1e1e1;box-shadow:inset 0 0 0 .7px #adadad"></div>
<div class="t" style="left:533.1px;top:297px;color:#111;font-size:7.5px;line-height:12px;">取消</div>
<svg style="left:561px;top:310px" width="7" height="7" viewBox="0 0 7 7"><path d="M6.5 1L1 6.5M6.5 3.5l-3 3" stroke="#9a9a9a" stroke-width=".8"/></svg>
</body></html>
